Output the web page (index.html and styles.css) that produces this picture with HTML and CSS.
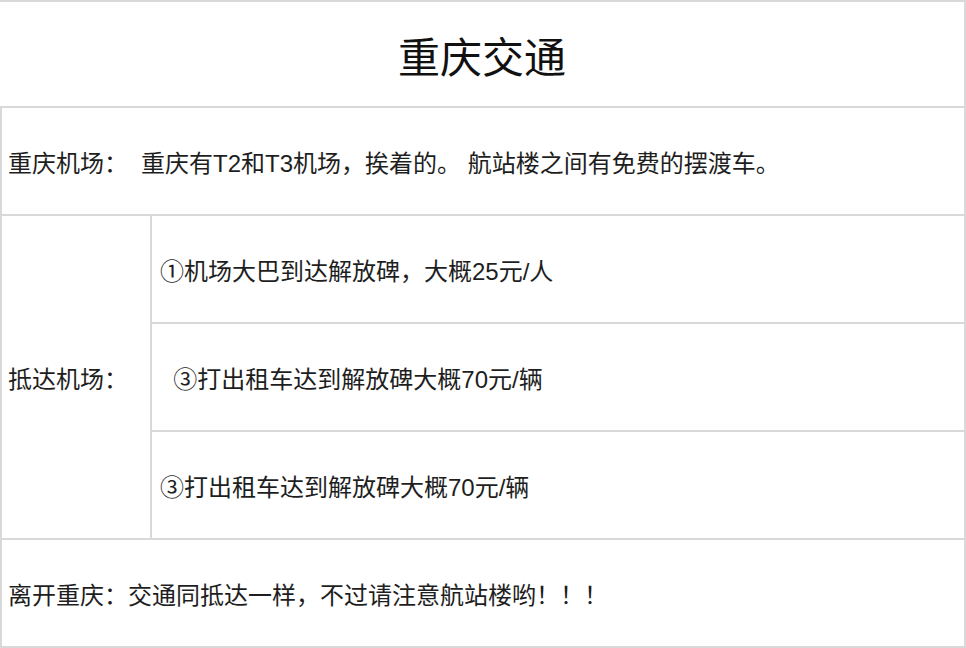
FILE: index.html
```html
<!DOCTYPE html>
<html lang="zh-CN">
<head>
<meta charset="utf-8">
<title>重庆交通</title>
<link rel="stylesheet" href="styles.css">
</head>
<body>
<div class="sheet">
  <div class="title">重庆交通</div>
  <div class="row">
    <div class="cell">重庆机场：<span class="gap">重庆有T2和T3机场，挨着的。 航站楼之间有免费的摆渡车。</span></div>
  </div>
  <div class="row split">
    <div class="cell label">抵达机场：</div>
    <div class="subs">
      <div class="cell sub">①机场大巴到达解放碑，大概25元/人</div>
      <div class="cell sub">&nbsp;&nbsp;③打出租车达到解放碑大概70元/辆</div>
      <div class="cell sub">③打出租车达到解放碑大概70元/辆</div>
    </div>
  </div>
  <div class="row">
    <div class="cell">离开重庆：交通同抵达一样，不过请注意航站楼哟！！！</div>
  </div>
</div>
</body>
</html>
```

FILE: styles.css
```css
html, body {
  margin: 0;
  padding: 0;
  background: #ffffff;
}

body {
  font-family: "Liberation Sans", "Noto Sans CJK SC", sans-serif;
  color: #1e1e1e;
  font-size: 24px;
}

.sheet {
  width: 966px;
  display: flex;
  flex-direction: column;
}

.title {
  height: 104px;
  border-top: 2px solid #d9d9d9;
  border-right: 2px solid #d9d9d9;
  border-bottom: 2px solid #d9d9d9;
  display: flex;
  align-items: center;
  justify-content: center;
  font-size: 42px;
  color: #111111;
}

.row {
  display: flex;
  border-left: 2px solid #d9d9d9;
  border-right: 2px solid #d9d9d9;
  border-bottom: 2px solid #d9d9d9;
}

.cell {
  height: 106px;
  display: flex;
  align-items: center;
  padding-left: 6px;
  white-space: pre;
}

.gap {
  margin-left: 13px;
}

.label {
  width: 142px;
  height: auto;
  border-right: 2px solid #d9d9d9;
  flex: none;
}

.subs {
  flex: 1;
  display: flex;
  flex-direction: column;
}

.sub {
  padding-left: 8px;
  border-bottom: 2px solid #d9d9d9;
}

.sub:last-child {
  border-bottom: none;
}
```
